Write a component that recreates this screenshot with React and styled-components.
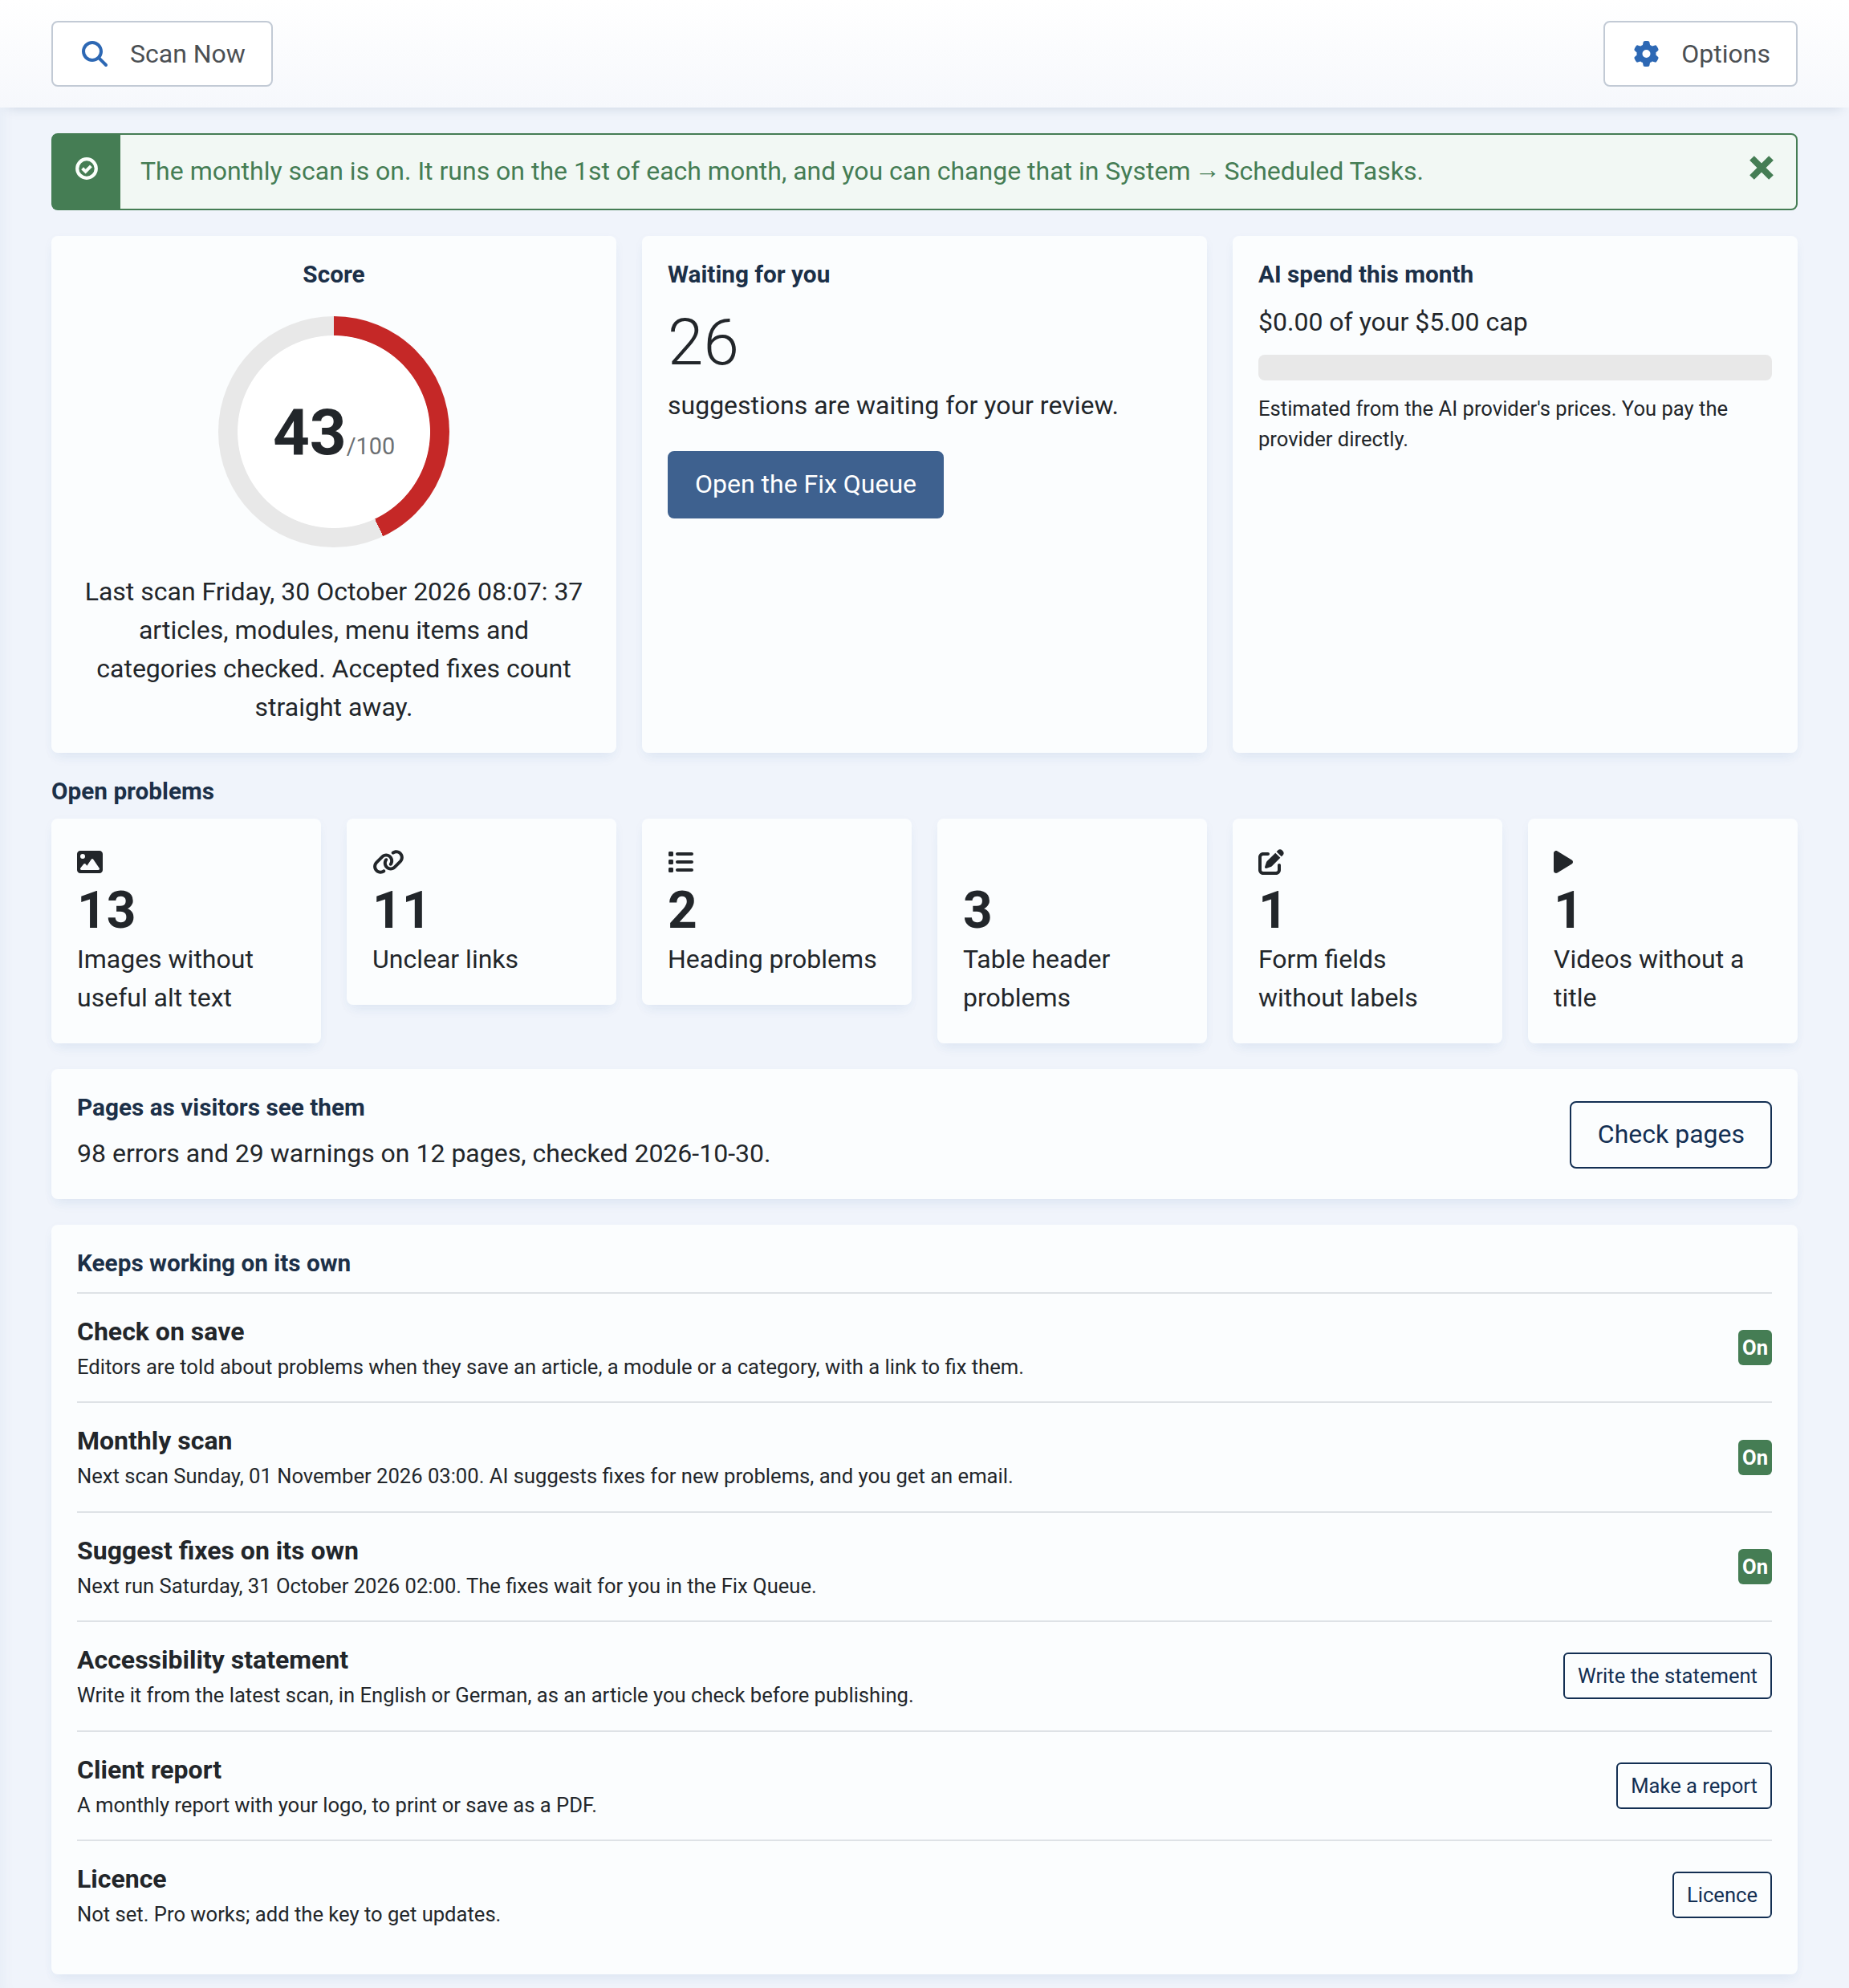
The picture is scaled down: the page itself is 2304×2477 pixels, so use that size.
import React from 'react';
import styled, { createGlobalStyle } from 'styled-components';
import {
  FaGear,
  FaImage,
  FaLink,
  FaList,
  FaMagnifyingGlass,
  FaPenToSquare,
  FaPlay,
} from 'react-icons/fa6';

const GlobalStyle = createGlobalStyle`
  * {
    box-sizing: border-box;
  }
  body {
    margin: 0;
    background: #f0f4fb;
    color: #22262a;
    font-family: Roboto, 'Liberation Sans', sans-serif;
    font-size: 32px;
    line-height: 1.5;
  }
  h2, p {
    margin: 0;
  }
`;

const Page = styled.div`
  min-height: 2477px;
  box-shadow: inset 18px 0 18px -16px rgba(30, 100, 150, 0.06);
`;

const Toolbar = styled.header`
  display: flex;
  justify-content: space-between;
  height: 134px;
  padding: 26px 64px;
  background: linear-gradient(#fff, #f6f8fc);
  box-shadow: 0 10px 14px -10px rgba(20, 60, 100, 0.18);
`;

const ToolbarButton = styled.button`
  display: flex;
  align-items: center;
  height: 82px;
  padding: 0 32px 0 34px;
  border: 2px solid #c2cad5;
  border-radius: 8px;
  background: #fff;
  color: #4b4f53;
  font: inherit;
  svg {
    width: ${(props) => props.$iconWidth || 36}px;
    height: 32px;
    margin-right: 26px;
    color: #2d68b4;
  }
`;

const Content = styled.main`
  display: flex;
  flex-direction: column;
  gap: 32px;
  padding: 32px 64px 17px;
`;

const Alert = styled.div`
  display: flex;
  height: 96px;
  border: 2px solid #457d54;
  border-radius: 8px;
  background: #f2f8f4;
  color: #457d54;
  p {
    flex: 1;
    padding: 21px 25px 0;
  }
`;

const Arrow = styled.span`
  margin: 0 -3px;
  line-height: 0;
  vertical-align: 2px;
`;

const AlertIcon = styled.div`
  display: flex;
  justify-content: center;
  width: 84px;
  padding-top: 28px;
  background: #457d54;
  color: #fafffb;
`;

const CloseButton = styled.button`
  align-self: flex-start;
  margin: 26px 28px 0 0;
  padding: 0;
  border: 0;
  background: none;
  color: #457d54;
  line-height: 0;
`;

const Summary = styled.div`
  display: grid;
  grid-template-columns: repeat(3, 1fr);
  gap: 32px;
`;

const Card = styled.section`
  padding: 32px;
  border-radius: 8px;
  background: #fbfdfe;
  box-shadow: 0 10px 16px -6px rgba(50, 100, 170, 0.08),
    0 4px 14px rgba(50, 100, 170, 0.035);
  text-align: ${(props) => (props.$center ? 'center' : 'left')};
`;

const Title = styled.h2`
  height: ${(props) => props.$height || 52}px;
  color: #1c3048;
  font-size: 29.75px;
  font-weight: 700;
  line-height: 32px;
`;

const Text = styled.p`
  margin-top: -1px;
  padding-bottom: 1px;
`;

const Ring = styled.div`
  display: flex;
  align-items: center;
  justify-content: center;
  width: 288px;
  height: 288px;
  margin: 16px auto 32px;
  border-radius: 50%;
  background: radial-gradient(closest-side, #fff 83%, transparent 83.6%),
    conic-gradient(#c52827 ${(props) => props.$value}%, #e8e8e8 0);
`;

const Score = styled.div`
  padding-top: 1px;
  line-height: 1;
  strong {
    font-size: 80px;
    font-weight: 700;
  }
  span {
    color: #6c7073;
    font-size: 28.8px;
  }
`;

const BigNumber = styled.p`
  padding: 1px 0 7px;
  font-size: 80px;
  font-weight: 300;
  line-height: 96px;
`;

const Button = styled.button`
  flex: none;
  height: 84px;
  padding: 0 32px 2px;
  border: 2px solid ${(props) => (props.$primary ? '#3e618f' : '#132f53')};
  border-radius: 8px;
  background: ${(props) => (props.$primary ? '#3e618f' : 'transparent')};
  color: ${(props) => (props.$primary ? '#fff' : '#132f53')};
  font: inherit;
`;

const QueueButton = styled(Button)`
  margin-top: 32px;
`;

const SmallButton = styled(Button)`
  height: 58px;
  padding: 0 16px;
  border-radius: 6px;
  font-size: 25.6px;
`;

const Meter = styled.div`
  height: 32px;
  margin: 16px 0;
  border-radius: 8px;
  background: #e8e8e8;
`;

const Small = styled.p`
  font-size: 25.6px;
`;

const Tiles = styled.div`
  display: grid;
  grid-template-columns: repeat(6, 1fr);
  align-items: start;
  gap: 32px;
`;

const TileIcon = styled.div`
  display: flex;
  align-items: center;
  height: 44px;
  svg {
    width: ${(props) => props.$width || 32}px;
    height: 32px;
  }
`;

const TileCount = styled.div`
  padding-top: 1px;
  font-size: 64px;
  font-weight: 700;
  line-height: 75px;
`;

const PagesCard = styled(Card)`
  display: flex;
  align-items: center;
  justify-content: space-between;
  ${Button} {
    margin-top: 2px;
    padding: 0 32px 2px 33px;
  }
`;

const Row = styled.div`
  display: flex;
  align-items: center;
  justify-content: space-between;
  padding: 24px 0;
  border-top: 2px solid #dee2e6;
`;

const RowName = styled(Text)`
  font-weight: 700;
`;

const Badge = styled.span`
  padding: 9px 5px;
  border-radius: 6px;
  background: #457d54;
  color: #fff;
  font-size: 25.6px;
  font-weight: 700;
  line-height: 26px;
`;

const problems = [
  { icon: FaImage, count: 13, label: 'Images without useful alt text' },
  { icon: FaLink, iconWidth: 40, count: 11, label: 'Unclear links' },
  { icon: FaList, count: 2, label: 'Heading problems' },
  { icon: null, count: 3, label: 'Table header problems' },
  { icon: FaPenToSquare, count: 1, label: 'Form fields without labels' },
  { icon: FaPlay, iconWidth: 24, count: 1, label: 'Videos without a title' },
];

const tasks = [
  {
    name: 'Check on save',
    text: 'Editors are told about problems when they save an article, a module or a category, with a link to fix them.',
  },
  {
    name: 'Monthly scan',
    text: 'Next scan Sunday, 01 November 2026 03:00. AI suggests fixes for new problems, and you get an email.',
  },
  {
    name: 'Suggest fixes on its own',
    text: 'Next run Saturday, 31 October 2026 02:00. The fixes wait for you in the Fix Queue.',
  },
  {
    name: 'Accessibility statement',
    text: 'Write it from the latest scan, in English or German, as an article you check before publishing.',
    action: 'Write the statement',
  },
  {
    name: 'Client report',
    text: 'A monthly report with your logo, to print or save as a PDF.',
    action: 'Make a report',
  },
  {
    name: 'Licence',
    text: 'Not set. Pro works; add the key to get updates.',
    action: 'Licence',
  },
];

function App() {
  return (
    <Page>
      <GlobalStyle />
      <Toolbar>
        <ToolbarButton>
          <FaMagnifyingGlass />
          Scan Now
        </ToolbarButton>
        <ToolbarButton $iconWidth={35}>
          <FaGear />
          Options
        </ToolbarButton>
      </Toolbar>
      <Content>
        <Alert>
          <AlertIcon>
            <svg width="28" height="28" viewBox="0 0 28 28" fill="none">
              <circle
                cx="14"
                cy="14"
                r="11.8"
                stroke="currentColor"
                strokeWidth="4.2"
              />
              <path
                d="M8.6 13.8L12.6 17.6L19.4 10.8"
                stroke="currentColor"
                strokeWidth="4"
              />
            </svg>
          </AlertIcon>
          <p>
            The monthly scan is on. It runs on the 1st of each month, and you
            can change that in System <Arrow>→</Arrow> Scheduled Tasks.
          </p>
          <CloseButton aria-label="Close">
            <svg width="30" height="30" viewBox="0 0 30 30">
              <path
                d="M3 3L27 27M27 3L3 27"
                stroke="currentColor"
                strokeWidth="8"
              />
            </svg>
          </CloseButton>
        </Alert>
        <Summary>
          <Card $center>
            <Title>Score</Title>
            <Ring $value={43}>
              <Score>
                <strong>43</strong>
                <span>/100</span>
              </Score>
            </Ring>
            <Text>
              Last scan Friday, 30 October 2026 08:07: 37 articles, modules,
              menu items and categories checked. Accepted fixes count straight
              away.
            </Text>
          </Card>
          <Card>
            <Title>Waiting for you</Title>
            <BigNumber>26</BigNumber>
            <Text>suggestions are waiting for your review.</Text>
            <QueueButton $primary>Open the Fix Queue</QueueButton>
          </Card>
          <Card>
            <Title>AI spend this month</Title>
            <Text>$0.00 of your $5.00 cap</Text>
            <Meter />
            <Small>
              Estimated from the AI provider's prices. You pay the provider
              directly.
            </Small>
          </Card>
        </Summary>
        <div>
          <Title $height={50}>Open problems</Title>
          <Tiles>
            {problems.map(({ icon: Icon, iconWidth, count, label }) => (
              <Card key={label}>
                <TileIcon $width={iconWidth}>{Icon && <Icon />}</TileIcon>
                <TileCount>{count}</TileCount>
                <Text>{label}</Text>
              </Card>
            ))}
          </Tiles>
        </div>
        <PagesCard>
          <div>
            <Title $height={50}>Pages as visitors see them</Title>
            <Text>
              98 errors and 29 warnings on 12 pages, checked 2026-10-30.
            </Text>
          </div>
          <Button>Check pages</Button>
        </PagesCard>
        <Card>
          <Title>Keeps working on its own</Title>
          {tasks.map((task) => (
            <Row key={task.name}>
              <div>
                <RowName>{task.name}</RowName>
                <Small>{task.text}</Small>
              </div>
              {task.action ? (
                <SmallButton>{task.action}</SmallButton>
              ) : (
                <Badge>On</Badge>
              )}
            </Row>
          ))}
        </Card>
      </Content>
    </Page>
  );
}

export default App;
